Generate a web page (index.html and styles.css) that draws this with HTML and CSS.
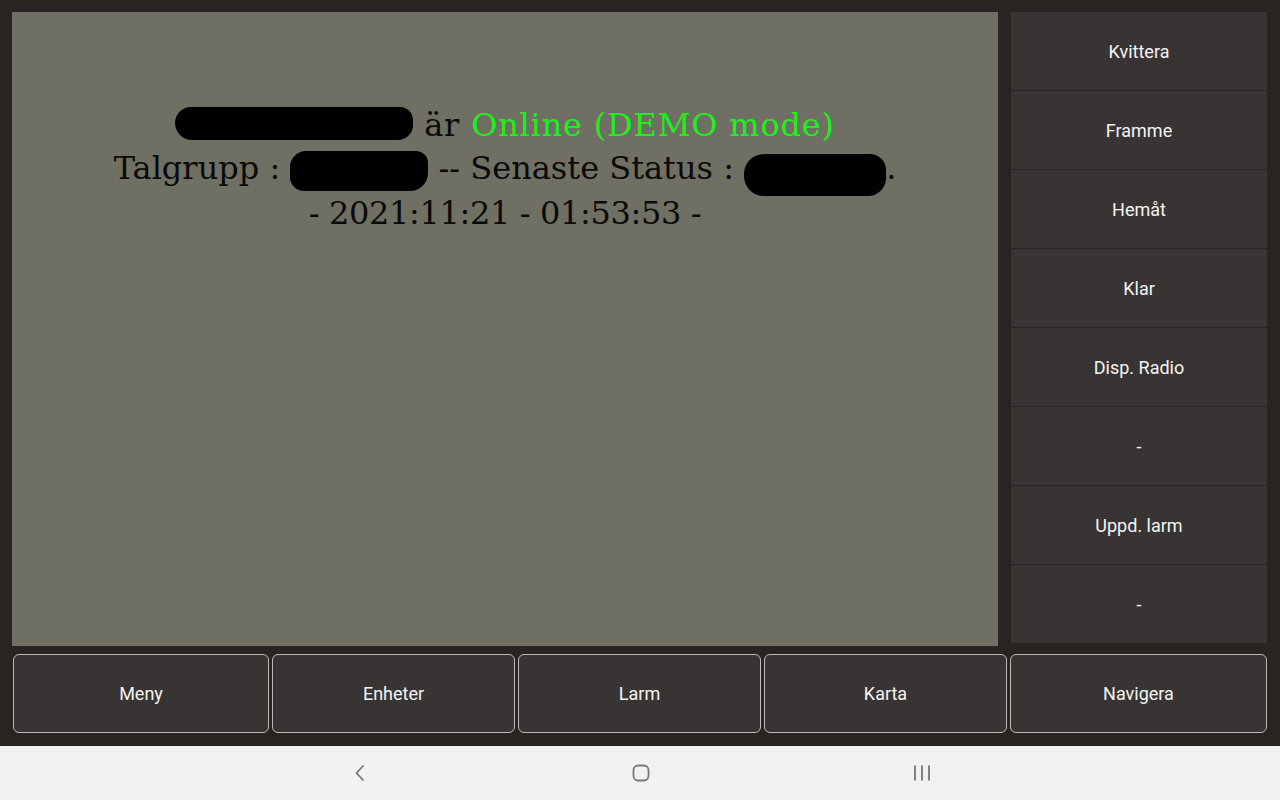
FILE: index.html
```html
<!DOCTYPE html>
<html lang="sv">
<head>
<meta charset="utf-8">
<title>Status</title>
<link rel="stylesheet" href="styles.css">
</head>
<body>
<div class="app">
  <div class="top">
    <main class="panel">
      <p class="line line-1"><span class="blob blob-name"></span> är <span class="online">Online (DEMO mode)</span></p>
      <p class="line">Talgrupp : <span class="blob blob-group"></span> -- Senaste Status : <span class="blob blob-status"></span>.</p>
      <p class="line line-3">- 2021:11:21 - 01:53:53 -</p>
    </main>
    <aside class="side">
      <button class="side-btn">Kvittera</button>
      <button class="side-btn">Framme</button>
      <button class="side-btn">Hemåt</button>
      <button class="side-btn">Klar</button>
      <button class="side-btn">Disp. Radio</button>
      <button class="side-btn">-</button>
      <button class="side-btn">Uppd. larm</button>
      <button class="side-btn">-</button>
    </aside>
  </div>
  <nav class="bottom">
    <button class="bot-btn">Meny</button>
    <button class="bot-btn">Enheter</button>
    <button class="bot-btn">Larm</button>
    <button class="bot-btn">Karta</button>
    <button class="bot-btn">Navigera</button>
  </nav>
</div>
<div class="sysnav">
  <svg class="ico" width="24" height="24" viewBox="0 0 24 24"><path d="M15 5 L8.5 12 L15 19" fill="none" stroke="#777" stroke-width="1.8" stroke-linecap="round" stroke-linejoin="round"/></svg>
  <svg class="ico" width="24" height="24" viewBox="0 0 24 24"><rect x="4.5" y="4.5" width="15" height="15" rx="4.5" fill="none" stroke="#777" stroke-width="1.8"/></svg>
  <svg class="ico" width="24" height="24" viewBox="0 0 24 24"><path d="M5 4.5 V19.5 M12 4.5 V19.5 M19 4.5 V19.5" fill="none" stroke="#777" stroke-width="1.8"/></svg>
</div>
</body>
</html>
```

FILE: styles.css
```css
* { box-sizing: border-box; }
html, body { margin: 0; padding: 0; }
body {
  width: 1280px;
  height: 800px;
  overflow: hidden;
  background: #282422;
  font-family: Roboto, "Noto Sans", sans-serif;
}
.app {
  height: 746px;
  padding: 12px 13px 0 12px;
  display: flex;
  flex-direction: column;
}
.top {
  display: flex;
  gap: 13px;
  height: 634px;
}
.panel {
  width: 986px;
  height: 634px;
  background: #6f6f63;
  padding-top: 92px;
  text-align: center;
  font-family: "DejaVu Serif", "Liberation Serif", serif;
  font-size: 32px;
  color: #0a0a0a;
}
.line {
  margin: 0;
  line-height: 43px;
  white-space: nowrap;
}
.line-1 { letter-spacing: 0.8px; }
.line-3 { letter-spacing: -0.35px; }
.online { color: #1ef01e; }
.blob {
  display: inline-block;
  background: #000;
  vertical-align: middle;
}
.blob-name { width: 238px; height: 33px; border-radius: 17px 14px 16px 18px; margin-top: -8px; }
.blob-group { width: 138px; height: 40px; border-radius: 16px 12px 18px 14px; }
.blob-status { width: 142px; height: 42px; border-radius: 20px 16px 18px 20px; position: relative; top: 4px; }
.side {
  width: 256px;
  height: 631px;
  display: flex;
  flex-direction: column;
  gap: 1px;
}
.side-btn {
  flex: 1;
  border: 0;
  margin: 0;
  background: #383433;
  color: #f4f4f4;
  font-family: Roboto, sans-serif;
  font-size: 18px;
  padding: 0;
}
.bottom {
  margin-top: 8px;
  margin-left: 1px;
  display: grid;
  grid-template-columns: 256px 243px 243px 243px 257px;
  gap: 3px;
  height: 79px;
}
.bot-btn {
  background: #383433;
  border: 1.5px solid #bdbab8;
  border-radius: 6px;
  color: #f4f4f4;
  font-family: Roboto, sans-serif;
  font-size: 18px;
  margin: 0;
  padding: 0;
}
.sysnav {
  height: 54px;
  background: #f2f2f2;
  display: flex;
  align-items: center;
}
.ico { display: block; }
.sysnav .ico:nth-child(1) { margin-left: 348px; }
.sysnav .ico:nth-child(2) { margin-left: 257px; }
.sysnav .ico:nth-child(3) { margin-left: 257px; }
```
